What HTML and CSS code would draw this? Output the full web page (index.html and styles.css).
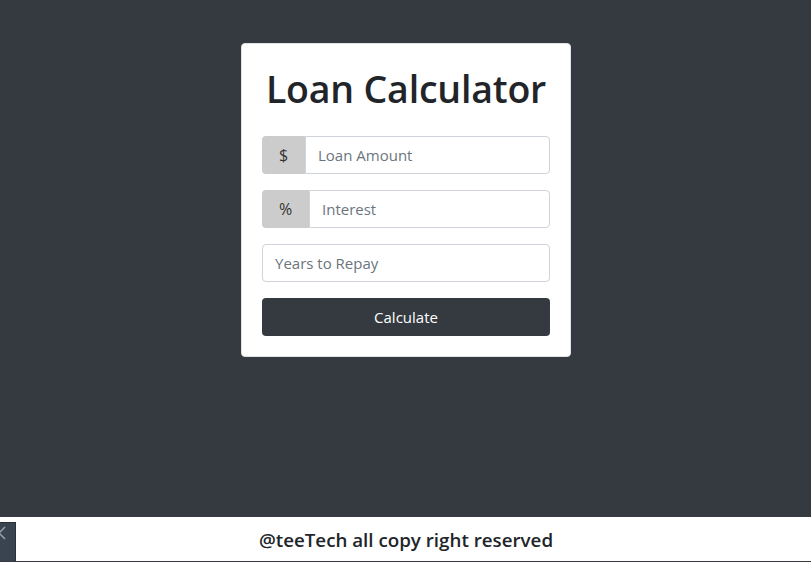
FILE: index.html
```html
<!DOCTYPE html>
<html lang="en">
<head>
<meta charset="utf-8">
<title>Loan Calculator</title>
<link rel="stylesheet" href="styles.css">
</head>
<body>
<main class="main">
  <div class="card">
    <h1 class="title">Loan Calculator</h1>
    <form class="form">
      <div class="group">
        <span class="addon addon-dollar">$</span>
        <input class="field field-joined" type="text" placeholder="Loan Amount">
      </div>
      <div class="group">
        <span class="addon addon-pct">%</span>
        <input class="field field-joined" type="text" placeholder="Interest">
      </div>
      <div class="group">
        <input class="field" type="text" placeholder="Years to Repay">
      </div>
      <button class="btn" type="button">Calculate</button>
    </form>
  </div>
</main>
<footer class="footer">
  <span class="side-tab"><svg width="16" height="20" viewBox="0 0 16 20"><path d="M5 4 L-1 10 L5 16" stroke="#9aa2ac" stroke-width="1.5" fill="none"/></svg></span>
  <p class="footer-text">@teeTech all copy right reserved</p>
</footer>
</body>
</html>
```
FILE: styles.css
```css
* { box-sizing: border-box; }
html, body { margin: 0; padding: 0; }
body {
  background: #343a40;
  font-family: "Open Sans", "Noto Sans", sans-serif;
  height: 562px;
  display: flex;
  flex-direction: column;
  overflow: hidden;
}
.main {
  flex: 1;
  display: flex;
  justify-content: center;
  align-items: flex-start;
  padding-top: 43px;
  padding-left: 1px;
}
.card {
  width: 330px;
  background: #fff;
  border: 1px solid #dee2e6;
  border-radius: 4px;
  padding: 20px 20px 20px;
}
.title {
  margin: 0 0 24px;
  font-size: 37.5px;
  font-weight: 600;
  line-height: 50px;
  text-align: center;
  color: #212529;
  letter-spacing: -0.2px;
  margin-bottom: 22px;
}
.form { display: flex; flex-direction: column; gap: 16px; }
.group { display: flex; height: 38px; }
.addon {
  display: flex;
  align-items: center;
  justify-content: center;
  background: #cccccc;
  color: #333;
  font-size: 16px;
  border-radius: 4px 0 0 4px;
}
.addon-dollar { width: 43px; }
.addon-pct { width: 47px; }
.field {
  flex: 1;
  min-width: 0;
  border: 1px solid #ced4da;
  border-radius: 4px;
  padding: 6px 12px;
  font-family: inherit;
  font-size: 15px;
  color: #495057;
  outline: none;
}
.field-joined { border-radius: 0 4px 4px 0; }
.field::placeholder { color: #6c757d; }
.btn {
  height: 38px;
  border: none;
  border-radius: 4px;
  background: #343a40;
  color: #fff;
  font-family: inherit;
  font-size: 15px;
}
.footer {
  position: relative;
  height: 44px;
  margin-bottom: 1px;
  background: #fff;
  display: flex;
  align-items: center;
  justify-content: center;
}
.footer-text {
  margin: 0;
  font-size: 18.75px;
  font-weight: 600;
  color: #212529;
  padding-left: 1px;
}
.side-tab {
  position: absolute;
  left: 0;
  top: 5px;
  bottom: 0;
  width: 16px;
  background: #3a4350;
  border-right: 1px solid #2a3038;
  border-top: 1px solid #2a3038;
}
```
